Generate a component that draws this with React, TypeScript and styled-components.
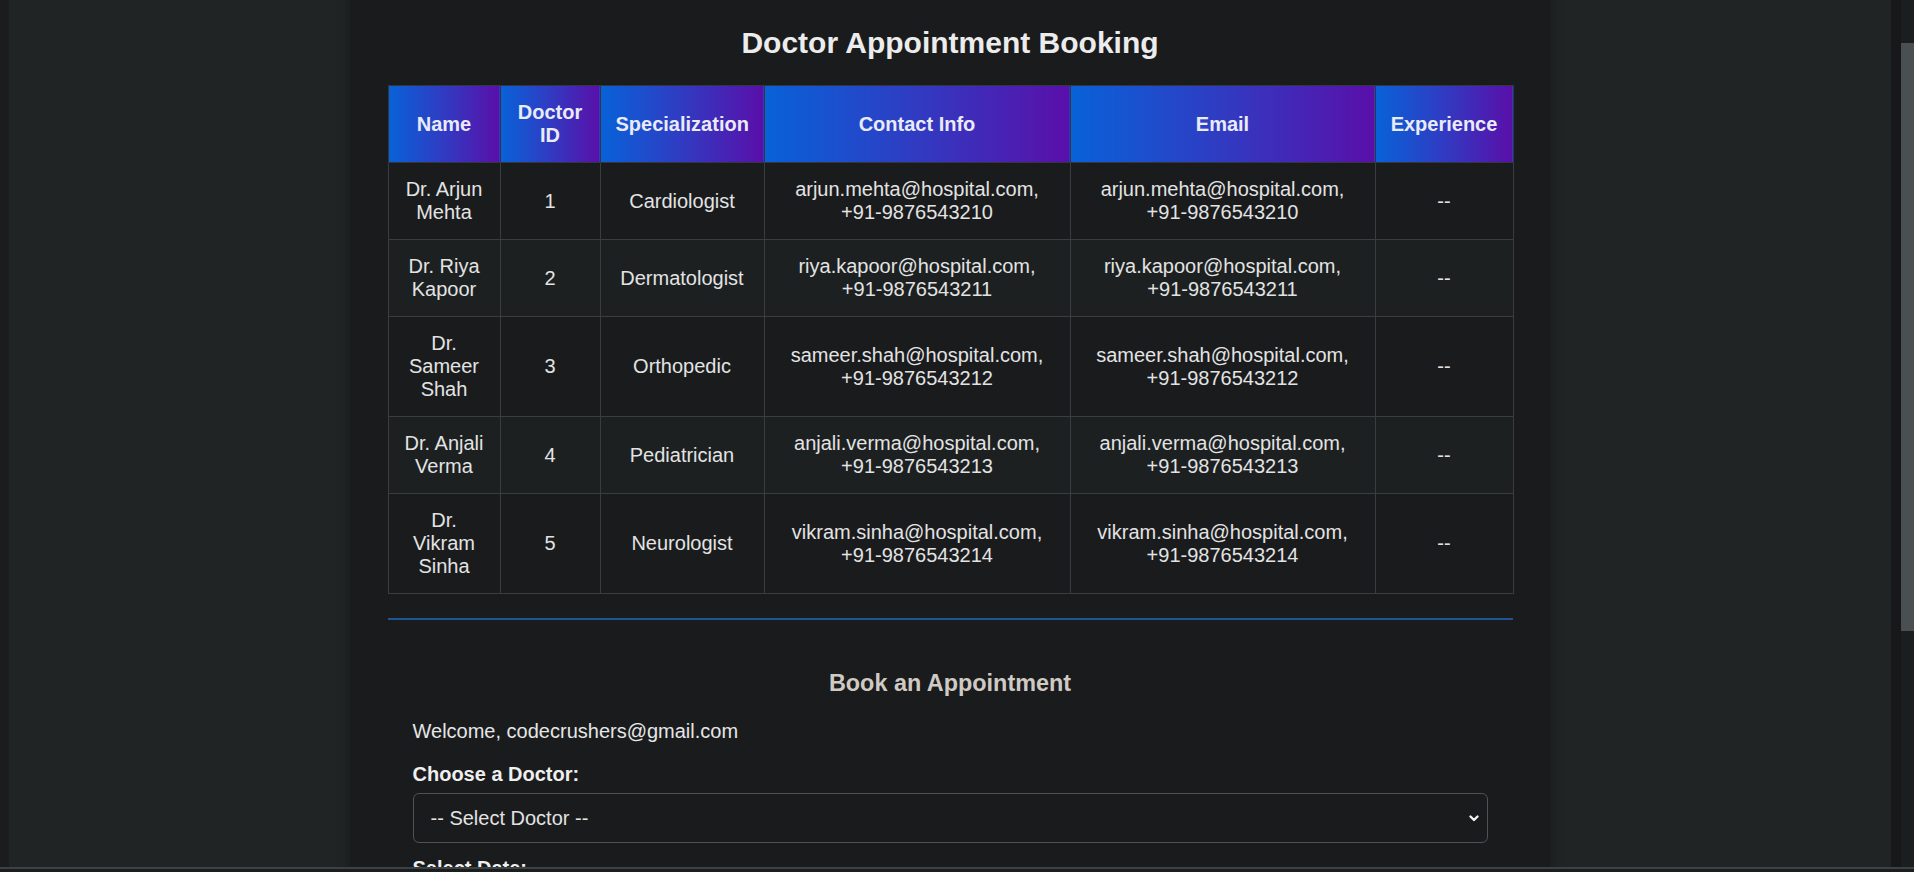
import React, { useLayoutEffect, useRef } from "react";
import styled, { createGlobalStyle } from "styled-components";

const GlobalStyle = createGlobalStyle`
  html, body {
    margin: 0;
    padding: 0;
    height: 100%;
    overflow: hidden;
    background: #202425;
    font-family: "Liberation Sans", Arial, sans-serif;
  }
  * { box-sizing: border-box; }
`;

const Frame = styled.div`
  display: flex;
  height: 100vh;
`;

const Scroller = styled.div`
  flex: 1;
  min-width: 0;
  overflow-y: scroll;
  overflow-x: hidden;
  scrollbar-width: none;
  &::-webkit-scrollbar {
    display: none;
  }
`;

const ScrollRail = styled.div`
  width: 23px;
  flex-shrink: 0;
  display: flex;
  background: linear-gradient(to right, #161819 0 10px, #1b1e1f 10px 100%);
`;

const ScrollThumb = styled.div`
  margin: 43px 0 0 10px;
  width: 13px;
  height: 588px;
  background: #4a4f51;
`;

const Page = styled.div`
  min-height: 1293px;
  display: flex;
  flex-direction: column;
  align-items: center;
  border-left: 9px solid #1a1c1d;
  background: #202425;
`;

const Card = styled.main`
  width: 1200px;
  flex: 1;
  background: #1a1b1d;
  padding: 88px 37.5px 37.5px;
  box-shadow: 0 0 12px rgba(0, 0, 0, 0.25);
  color: #e2e2e2;
`;

const Title = styled.h2`
  margin: 2px 0 25px;
  font-size: 30px;
  font-weight: 700;
  text-align: center;
  color: #ececec;
`;

const Table = styled.table`
  width: 1125px;
  border-collapse: collapse;
  table-layout: fixed;
  font-size: 20px;
`;

const HeadCell = styled.th`
  padding: 15px;
  border: 1px solid #33363a;
  background: linear-gradient(90deg, #0862d8 0%, #2c3fc4 45%, #5a0fa9 100%);
  color: #e9ebf8;
  font-weight: 700;
  text-align: center;
  vertical-align: middle;
  line-height: 23px;
`;

const Row = styled.tr<{ $alt: boolean }>`
  background: ${(p) => (p.$alt ? "#1c2021" : "#1a1b1d")};
`;

const Cell = styled.td`
  padding: 15px;
  border: 1px solid #3a3d40;
  color: #e3e3e3;
  text-align: center;
  vertical-align: middle;
  line-height: 23px;
`;

const Divider = styled.hr`
  width: 1125px;
  margin: 24px 0 0;
  border: 0;
  height: 2px;
  background: #1f5596;
`;

const FormSection = styled.section`
  padding: 26.5px 25px 0;
`;

const SubTitle = styled.h3`
  margin: 23.4px 0 23.4px;
  font-size: 23.4px;
  font-weight: 700;
  text-align: center;
  color: #cfcac4;
`;

const Welcome = styled.p`
  margin: 0 0 20px;
  font-size: 20px;
  line-height: 23px;
  color: #e6e6e6;
`;

const Label = styled.label`
  display: block;
  margin: 0 0 6.5px;
  font-size: 20px;
  line-height: 23px;
  font-weight: 700;
  color: #efefef;
`;

const Field = styled.div`
  position: relative;
  margin-bottom: 14px;
`;

const Select = styled.select`
  display: block;
  width: 100%;
  height: 50px;
  padding: 0 40px 0 17px;
  appearance: none;
  background: #1a1b1d;
  border: 1px solid #4f5356;
  border-radius: 6px;
  color: #e2e2e2;
  font-family: "Liberation Sans", Arial, sans-serif;
  font-size: 20px;
  outline: none;
`;

const Input = styled.input`
  display: block;
  width: 100%;
  height: 50px;
  padding: 0 17px;
  background: #1a1b1d;
  border: 1px solid #4f5356;
  border-radius: 6px;
  color: #e2e2e2;
  font-family: "Liberation Sans", Arial, sans-serif;
  font-size: 20px;
  color-scheme: dark;
`;

const Chevron = styled.svg`
  position: absolute;
  right: 7px;
  top: 50%;
  transform: translateY(-50%);
  pointer-events: none;
`;

const Button = styled.button`
  display: block;
  width: 100%;
  height: 50px;
  border: 0;
  border-radius: 6px;
  background: linear-gradient(90deg, #0862d8, #5a0fa9);
  color: #fff;
  font-family: "Liberation Sans", Arial, sans-serif;
  font-size: 20px;
  font-weight: 700;
`;

const BottomEdge = styled.div`
  position: fixed;
  left: 0;
  right: 0;
  bottom: 0;
  height: 5px;
  border-top: 2px solid #3c4143;
  background: #1b1e1f;
`;

const doctors = [
  { name: "Dr. Arjun Mehta", id: 1, spec: "Cardiologist", email: "arjun.mehta@hospital.com", phone: "+91-9876543210" },
  { name: "Dr. Riya Kapoor", id: 2, spec: "Dermatologist", email: "riya.kapoor@hospital.com", phone: "+91-9876543211" },
  { name: "Dr. Sameer Shah", id: 3, spec: "Orthopedic", email: "sameer.shah@hospital.com", phone: "+91-9876543212" },
  { name: "Dr. Anjali Verma", id: 4, spec: "Pediatrician", email: "anjali.verma@hospital.com", phone: "+91-9876543213" },
  { name: "Dr. Vikram Sinha", id: 5, spec: "Neurologist", email: "vikram.sinha@hospital.com", phone: "+91-9876543214" },
];

const colWidths = [112, 100, 164, 306, 305, 138];

const ChevronIcon = () => (
  <Chevron width="14" height="14" viewBox="0 0 14 14" aria-hidden="true">
    <path d="M3.5 5.5 L7 9 L10.5 5.5" fill="none" stroke="#f2f2f2" strokeWidth="2.4" strokeLinecap="round" strokeLinejoin="round" />
  </Chevron>
);

export default function App() {
  const ref = useRef<HTMLDivElement>(null);
  useLayoutEffect(() => {
    if (ref.current) ref.current.scrollTop = 64;
  }, []);

  return (
    <>
      <GlobalStyle />
      <Frame>
        <Scroller ref={ref}>
          <Page>
            <Card>
              <Title>Doctor Appointment Booking</Title>
              <Table>
                <colgroup>
                  {colWidths.map((w, i) => (
                    <col key={i} style={{ width: w }} />
                  ))}
                </colgroup>
                <thead>
                  <tr>
                    <HeadCell>Name</HeadCell>
                    <HeadCell>Doctor ID</HeadCell>
                    <HeadCell>Specialization</HeadCell>
                    <HeadCell>Contact Info</HeadCell>
                    <HeadCell>Email</HeadCell>
                    <HeadCell>Experience</HeadCell>
                  </tr>
                </thead>
                <tbody>
                  {doctors.map((d, i) => (
                    <Row key={d.id} $alt={i % 2 === 1}>
                      <Cell>{d.name}</Cell>
                      <Cell>{d.id}</Cell>
                      <Cell>{d.spec}</Cell>
                      <Cell>{`${d.email}, ${d.phone}`}</Cell>
                      <Cell>{`${d.email}, ${d.phone}`}</Cell>
                      <Cell>--</Cell>
                    </Row>
                  ))}
                </tbody>
              </Table>
              <Divider />
              <FormSection>
                <SubTitle>Book an Appointment</SubTitle>
                <Welcome>Welcome, codecrushers@gmail.com</Welcome>
                <Label htmlFor="doctor">Choose a Doctor:</Label>
                <Field>
                  <Select id="doctor" defaultValue="">
                    <option value="">-- Select Doctor --</option>
                    {doctors.map((d) => (
                      <option key={d.id} value={d.id}>
                        {d.name}
                      </option>
                    ))}
                  </Select>
                  <ChevronIcon />
                </Field>
                <Label htmlFor="date">Select Date:</Label>
                <Field>
                  <Input id="date" type="date" />
                </Field>
                <Label htmlFor="time">Select Time:</Label>
                <Field>
                  <Select id="time" defaultValue="">
                    <option value="">-- Select Time --</option>
                  </Select>
                  <ChevronIcon />
                </Field>
                <Button type="button">Book Appointment</Button>
              </FormSection>
            </Card>
          </Page>
        </Scroller>
        <ScrollRail>
          <ScrollThumb />
        </ScrollRail>
      </Frame>
      <BottomEdge />
    </>
  );
}
